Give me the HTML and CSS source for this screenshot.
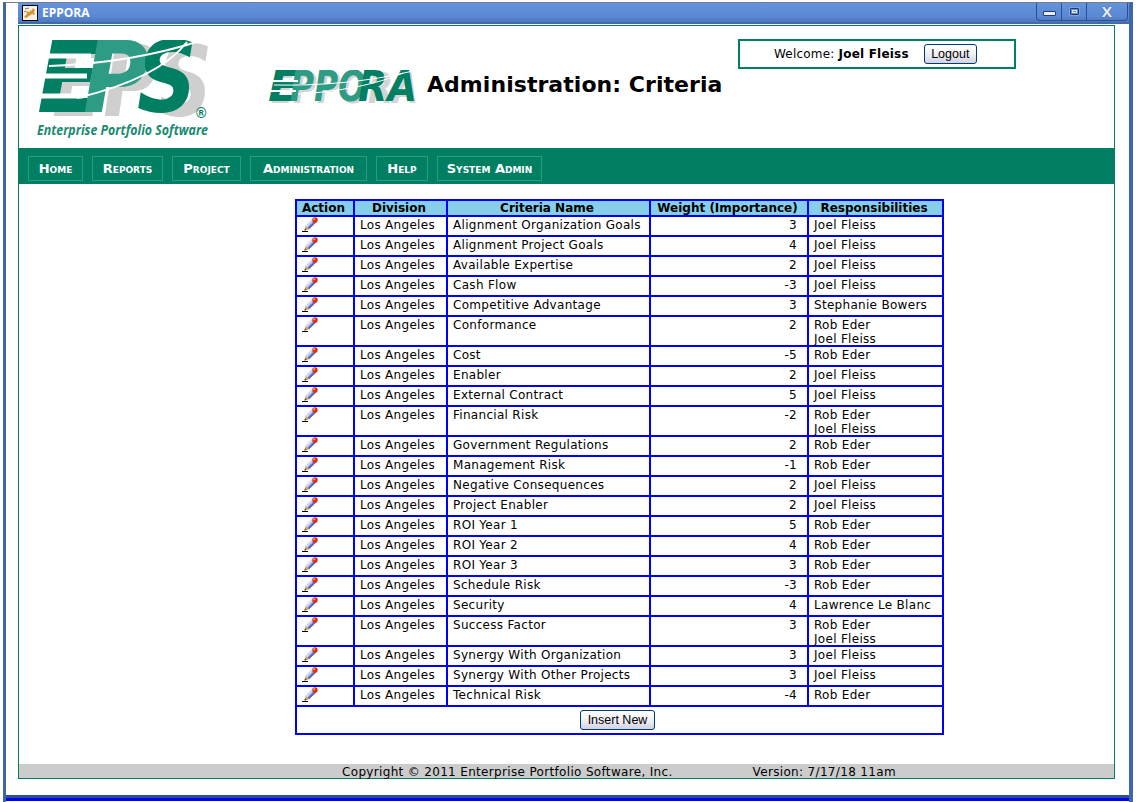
FILE: index.html
```html
<!DOCTYPE html>
<html>
<head>
    <title>EPPORA</title>
    <link rel="stylesheet" href="styles.css">
</head>
<body>
    <svg class="defs" width="0" height="0">
        <symbol id="pencil" viewBox="0 0 16 15">
            <polygon points="10.5,1.5 14.5,5 7,12.2 3.6,9" fill="#9ca6e4"/>
            <polygon points="10.5,1.5 12,2.8 5,10.5 3.6,9" fill="#d4d9f8"/>
            <polygon points="13,3.8 14.5,5 7,12.2 5.8,11" fill="#5c64ac"/>
            <polygon points="3.6,9 7,12.2 2.5,13.6" fill="#c8a050"/>
            <polygon points="2.9,11.6 4.6,13 2.5,13.6" fill="#3c2a04"/>
            <circle cx="13" cy="3" r="2.7" fill="#e02c10"/>
            <circle cx="12.2" cy="2.2" r="1.1" fill="#f8b020"/>
            <rect x="0" y="14" width="6" height="1" fill="#000"/>
        </symbol>
    </svg>
    <div class="window">
        <div class="titlebar">
            <svg class="app-icon" width="16" height="16" viewBox="0 0 16 16">
                <rect x="0.5" y="0.5" width="15" height="15" fill="#f4f0e4" stroke="#000"/>
                <path d="M2 12 L5 9 L4 6 L7 7 L10 5 L11 3 L13 5 L12 7 L13 10 L10 9 L7 11 L4 13 Z" fill="#d89030"/>
                <path d="M3 4 L7 3 M2 7 L4 6" stroke="#8a7a60" fill="none"/>
            </svg>
            <span class="title-text">EPPORA</span>
            <div class="win-buttons">
                <div class="win-btn win-min"><span></span></div>
                <div class="win-btn win-max"><span></span></div>
                <div class="win-btn win-close">X</div>
            </div>
        </div>
        <div class="page">
            <div class="header">
                <svg class="logo-eps" width="176" height="100" viewBox="0 0 176 100">
                    <g class="logo-letters" font-size="98">
                        <text x="15" y="76" textLength="160" lengthAdjust="spacingAndGlyphs" fill="#cfcfcf">EPS</text>
                        <text x="0" y="72" textLength="64" lengthAdjust="spacingAndGlyphs" fill="#007f63">E</text>
                        <text x="46" y="72" textLength="66" lengthAdjust="spacingAndGlyphs" fill="#2e9c84">P</text>
                        <text x="100" y="72" textLength="60" lengthAdjust="spacingAndGlyphs" fill="#007f63">S</text>
                    </g>
                    <g stroke="#fff" fill="none">
                        <path d="M0 16 H54" stroke-width="5"/>
                        <path d="M0 36 H50" stroke-width="5"/>
                        <path d="M0 56 H46" stroke-width="5"/>
                        <path d="M12 26 C70 24 125 14 172 -2" stroke-width="2"/>
                        <path d="M40 58 C90 46 130 28 150 2" stroke-width="2"/>
                    </g>
                    <text class="logo-reg" x="159" y="78">®</text>
                    <text class="logo-tag" x="0" y="95" textLength="171" lengthAdjust="spacingAndGlyphs">Enterprise Portfolio Software</text>
                </svg>
                <svg class="logo-eppora" width="150" height="34" viewBox="0 0 150 34">
                    <g class="logo-letters" font-size="43">
                        <text x="3" y="33" textLength="147" lengthAdjust="spacingAndGlyphs" fill="#d4d4d4">EPPORA</text>
                        <text x="0" y="31" textLength="32" lengthAdjust="spacingAndGlyphs" fill="#007f63">E</text>
                        <text x="22" y="31" textLength="76" lengthAdjust="spacingAndGlyphs" fill="#2e9c84">PPO</text>
                        <text x="90" y="31" textLength="59" lengthAdjust="spacingAndGlyphs" fill="#007f63">RA</text>
                    </g>
                    <g stroke="#fff" fill="none">
                        <path d="M0 11 H30" stroke-width="2"/>
                        <path d="M0 21 H28" stroke-width="2"/>
                        <path d="M6 15 C50 16 100 12 145 1" stroke-width="1"/>
                        <path d="M30 24 C70 22 110 14 135 3" stroke-width="1"/>
                    </g>
                </svg>
                <h1 class="page-title">Administration: Criteria</h1>
                <div class="welcome">
                    <span>Welcome: <b>Joel Fleiss</b></span>
                    <button class="xp-btn logout-btn">Logout</button>
                </div>
            </div>
            <div class="nav">
                <a class="nav-item">Home</a>
                <a class="nav-item">Reports</a>
                <a class="nav-item">Project</a>
                <a class="nav-item">Administration</a>
                <a class="nav-item">Help</a>
                <a class="nav-item">System Admin</a>
            </div>
            <div class="main">
                <table class="grid">
                    <colgroup>
                        <col class="col-action">
                        <col class="col-division">
                        <col class="col-name">
                        <col class="col-weight">
                        <col class="col-resp">
                    </colgroup>
                    <thead>
                        <tr>
                            <th>Action</th>
                            <th>Division</th>
                            <th>Criteria Name</th>
                            <th>Weight (Importance)</th>
                            <th>Responsibilities</th>
                        </tr>
                    </thead>
                    <tbody id="criteriaList">
                    </tbody>
                    <tfoot>
                        <tr>
                            <td colspan="5" class="insert-cell"><button class="xp-btn insert-btn">Insert New</button></td>
                        </tr>
                    </tfoot>
                </table>
            </div>
            <div class="footer">
                <span>Copyright © 2011 Enterprise Portfolio Software, Inc.</span>
                <span>Version: 7/17/18 11am</span>
            </div>
        </div>
        <div class="bottom-edge"></div>
    </div>

    <script>
        const criteria = [
            ["Alignment Organization Goals", 3, ["Joel Fleiss"]],
            ["Alignment Project Goals", 4, ["Joel Fleiss"]],
            ["Available Expertise", 2, ["Joel Fleiss"]],
            ["Cash Flow", -3, ["Joel Fleiss"]],
            ["Competitive Advantage", 3, ["Stephanie Bowers"]],
            ["Conformance", 2, ["Rob Eder", "Joel Fleiss"]],
            ["Cost", -5, ["Rob Eder"]],
            ["Enabler", 2, ["Joel Fleiss"]],
            ["External Contract", 5, ["Joel Fleiss"]],
            ["Financial Risk", -2, ["Rob Eder", "Joel Fleiss"]],
            ["Government Regulations", 2, ["Rob Eder"]],
            ["Management Risk", -1, ["Rob Eder"]],
            ["Negative Consequences", 2, ["Joel Fleiss"]],
            ["Project Enabler", 2, ["Joel Fleiss"]],
            ["ROI Year 1", 5, ["Rob Eder"]],
            ["ROI Year 2", 4, ["Rob Eder"]],
            ["ROI Year 3", 3, ["Rob Eder"]],
            ["Schedule Risk", -3, ["Rob Eder"]],
            ["Security", 4, ["Lawrence Le Blanc"]],
            ["Success Factor", 3, ["Rob Eder", "Joel Fleiss"]],
            ["Synergy With Organization", 3, ["Joel Fleiss"]],
            ["Synergy With Other Projects", 3, ["Joel Fleiss"]],
            ["Technical Risk", -4, ["Rob Eder"]]
        ];

        const list = document.getElementById("criteriaList");
        for (const c of criteria) {
            const row = document.createElement("tr");
            row.innerHTML = `
                <td><svg class="pencil" width="16" height="15"><use href="#pencil"/></svg></td>
                <td><div class="cell">Los Angeles</div></td>
                <td><div class="cell">${c[0]}</div></td>
                <td class="num"><div class="cell">${c[1]}</div></td>
                <td><div class="cell">${c[2].join("<br>")}</div></td>
            `;
            list.appendChild(row);
        }
    </script>
</body>
</html>
```

FILE: styles.css
```css
html, body {
    margin: 0;
    padding: 0;
    height: 100%;
    overflow: hidden;
    background-color: #fff;
}
body {
    font-family: "DejaVu Sans", sans-serif;
    font-size: 12px;
    color: #000;
}
.defs {
    position: absolute;
}
.window {
    display: flex;
    flex-direction: column;
    height: 800px;
    box-sizing: border-box;
    margin: 2px 4px 0 3px;
    padding-left: 12px;
    border-top: 1px solid #7a7a84;
    border-left: 3px solid #3e66a8;
    border-right: 4px solid #3e66a8;
}
.titlebar {
    display: flex;
    align-items: center;
    flex: none;
    height: 21px;
    box-sizing: border-box;
    padding: 0 1px 0 4px;
    background: linear-gradient(#6493dc, #5a88d4 70%, #4e78c0);
    border-bottom: 2px solid #4468a8;
}
.app-icon {
    display: block;
}
.title-text {
    margin-left: 4px;
    font-family: "Open Sans", sans-serif;
    font-size: 12px;
    font-weight: 700;
    color: #fff;
}
.win-buttons {
    display: flex;
    margin-left: auto;
    height: 18px;
    margin-top: -2px;
    border: 1px solid #2e4f8e;
    border-top: 0;
    border-radius: 0 0 4px 4px;
    box-sizing: border-box;
}
.win-btn {
    display: flex;
    align-items: center;
    justify-content: center;
    width: 24px;
    border-right: 1px solid #2e4f8e;
}
.win-close {
    width: 40px;
    padding-top: 1px;
    box-sizing: border-box;
    border-right: 0;
    font-size: 14px;
    line-height: 16px;
    font-weight: 700;
    color: #dfe8f8;
    text-shadow: 0 0 1px #223;
}
.win-min span {
    display: block;
    width: 11px;
    height: 3px;
    margin-top: 5px;
    border: 1px solid #223a70;
    background-color: #e8eefa;
    border-radius: 1px;
}
.win-max span {
    display: block;
    width: 7px;
    height: 5px;
    border: 1px solid #223a70;
    outline: 1px solid #dfe8f8;
    outline-offset: -3px;
    box-shadow: 0 0 0 1px #7fa0dc;
    border-radius: 1px;
}
.page {
    display: flex;
    flex-direction: column;
    flex: none;
    width: 1097px;
    height: 754px;
    margin-top: 1px;
    box-sizing: border-box;
    border: 1px solid #007f63;
}
.header {
    position: relative;
    height: 122px;
    flex: none;
}
.logo-eps {
    position: absolute;
    left: 18px;
    top: 14px;
}
.logo-letters {
    font-family: "DejaVu Sans", sans-serif;
    font-weight: 700;
    font-style: italic;
}
.logo-reg {
    font-family: "Liberation Sans", sans-serif;
    font-size: 14px;
    font-weight: 700;
    fill: #007f63;
}
.logo-tag {
    font-family: "Open Sans", sans-serif;
    font-size: 14px;
    font-weight: 700;
    font-style: italic;
    fill: #1a8a70;
}
.logo-eppora {
    position: absolute;
    left: 249px;
    top: 44px;
}
.page-title {
    position: absolute;
    left: 408px;
    top: 45px;
    margin: 0;
    font-size: 22px;
    line-height: 28px;
    font-weight: 700;
    letter-spacing: 0.05px;
}
.welcome {
    position: absolute;
    left: 719px;
    top: 13px;
    width: 278px;
    height: 30px;
    box-sizing: border-box;
    border: 2px solid #007f63;
    display: flex;
    align-items: center;
    padding-left: 34px;
    gap: 15px;
    letter-spacing: 0.2px;
}
.xp-btn {
    padding: 0;
    border: 1px solid #003c74;
    border-radius: 3px;
    background: linear-gradient(#fff, #f0f0f4 50%, #d2d2e2);
    font-family: "Liberation Sans", sans-serif;
    font-size: 12.5px;
    color: #000;
    height: 20px;
}
.logout-btn {
    width: 53px;
}
.insert-btn {
    display: block;
    width: 75px;
    margin: 3px 0 0 283px;
}
.nav {
    display: flex;
    flex: none;
    gap: 9px;
    height: 36px;
    box-sizing: border-box;
    padding: 8px 0 3px 9px;
    background-color: #007f63;
}
.nav-item {
    display: flex;
    align-items: center;
    justify-content: center;
    width: 55px;
    box-sizing: border-box;
    border: 1px solid #2a9a82;
    font-size: 13px;
    font-weight: 700;
    font-variant: small-caps;
    color: #fff;
}
.nav-item:nth-child(2) { width: 71px; }
.nav-item:nth-child(3) { width: 69px; }
.nav-item:nth-child(4) { width: 117px; }
.nav-item:nth-child(5) { width: 52px; }
.nav-item:nth-child(6) { width: 105px; }
.main {
    flex: 1;
    padding: 15px 0 0 276px;
}
.grid {
    width: 649px;
    table-layout: fixed;
    border-collapse: collapse;
    border: 2px solid #00f;
    font-size: 12px;
    line-height: 14px;
    letter-spacing: 0.3px;
}
.col-action { width: 58px; }
.col-division { width: 93px; }
.col-name { width: 203px; }
.col-weight { width: 158px; }
.col-resp { width: 135px; }
.grid th, .grid td {
    border: 2px solid #00f;
    padding: 0 5px;
    height: 18px;
    vertical-align: top;
    text-align: left;
    white-space: nowrap;
}
.grid th {
    height: 14px;
    padding: 0 3px 0 0;
    text-align: center;
    font-weight: 700;
    letter-spacing: 0;
    background-color: #87ceeb;
}
.cell {
    margin: 1px 0 -1px;
}
.grid td.num {
    padding-right: 10px;
    text-align: right;
}
.pencil {
    display: block;
}
.grid td.insert-cell {
    height: 26px;
    padding: 0;
    text-align: left;
}
.footer {
    display: flex;
    flex: none;
    gap: 80px;
    height: 13px;
    padding: 1px 0 0 323px;
    background-color: #ccc;
    line-height: 14px;
    letter-spacing: 0.33px;
}
.bottom-edge {
    margin: 16px 0 0 -12px;
    height: 6px;
    border-top: 3px solid #2f5090;
    box-sizing: border-box;
    background-color: #00f;
}
```
